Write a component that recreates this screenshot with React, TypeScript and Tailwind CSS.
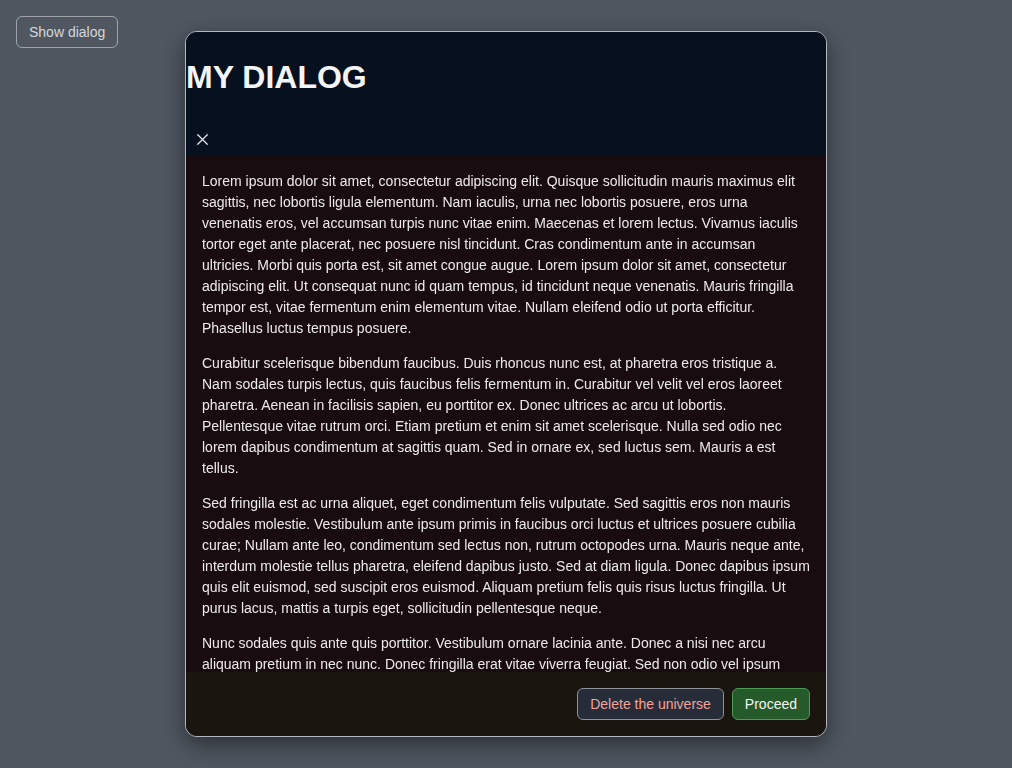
import React from "react";
import { X } from "lucide-react";

const paragraphs = [
  "Lorem ipsum dolor sit amet, consectetur adipiscing elit. Quisque sollicitudin mauris maximus elit sagittis, nec lobortis ligula elementum. Nam iaculis, urna nec lobortis posuere, eros urna venenatis eros, vel accumsan turpis nunc vitae enim. Maecenas et lorem lectus. Vivamus iaculis tortor eget ante placerat, nec posuere nisl tincidunt. Cras condimentum ante in accumsan ultricies. Morbi quis porta est, sit amet congue augue. Lorem ipsum dolor sit amet, consectetur adipiscing elit. Ut consequat nunc id quam tempus, id tincidunt neque venenatis. Mauris fringilla tempor est, vitae fermentum enim elementum vitae. Nullam eleifend odio ut porta efficitur. Phasellus luctus tempus posuere.",
  "Curabitur scelerisque bibendum faucibus. Duis rhoncus nunc est, at pharetra eros tristique a. Nam sodales turpis lectus, quis faucibus felis fermentum in. Curabitur vel velit vel eros laoreet pharetra. Aenean in facilisis sapien, eu porttitor ex. Donec ultrices ac arcu ut lobortis. Pellentesque vitae rutrum orci. Etiam pretium et enim sit amet scelerisque. Nulla sed odio nec lorem dapibus condimentum at sagittis quam. Sed in ornare ex, sed luctus sem. Mauris a est tellus.",
  "Sed fringilla est ac urna aliquet, eget condimentum felis vulputate. Sed sagittis eros non mauris sodales molestie. Vestibulum ante ipsum primis in faucibus orci luctus et ultrices posuere cubilia curae; Nullam ante leo, condimentum sed lectus non, rutrum octopodes urna. Mauris neque ante, interdum molestie tellus pharetra, eleifend dapibus justo. Sed at diam ligula. Donec dapibus ipsum quis elit euismod, sed suscipit eros euismod. Aliquam pretium felis quis risus luctus fringilla. Ut purus lacus, mattis a turpis eget, sollicitudin pellentesque neque.",
  "Nunc sodales quis ante quis porttitor. Vestibulum ornare lacinia ante. Donec a nisi nec arcu aliquam pretium in nec nunc. Donec fringilla erat vitae viverra feugiat. Sed non odio vel ipsum placerat pharetra. Integer quis mi ac nisl volutpat finibus. Curabitur ut tortor id leo ultricies pulvinar. Proin sit amet mauris eget felis pretium tincidunt.",
];

export default function App() {
  return (
    <div
      className="min-h-screen bg-[#505761] p-4"
      style={{ fontFamily: '"Liberation Sans", Arial, sans-serif' }}
    >
      <button className="h-8 rounded-md border border-[#9ea3aa] px-3 text-sm text-[#d4d7dc]">
        Show dialog
      </button>

      {/* Dialog */}
      <div className="fixed inset-0 flex items-center justify-center">
        <div className="flex h-[706px] w-[642px] flex-col overflow-hidden rounded-xl border border-[#b3b7bd] shadow-[0_8px_24px_rgba(0,0,0,0.45)]">
          {/* Header */}
          <div className="flex h-[123px] shrink-0 flex-col bg-[#07101e]">
            <h1 className="mt-[27px] text-[32px] leading-[37px] font-bold text-[#f3f4f6]">
              MY DIALOG
            </h1>
            <button className="mt-[38px] ml-[11px] flex h-[10px] w-[10px] items-center justify-center text-[#e5e7eb]">
              <X size={19} strokeWidth={1.5} className="shrink-0" />
            </button>
          </div>

          {/* Body */}
          <div className="min-h-0 flex-1 overflow-hidden bg-[#190c10] px-4 pt-4">
            {paragraphs.map((p, i) => (
              <p key={i} className="mb-[14px] text-sm leading-[21px] text-[#eceaea]">
                {p}
              </p>
            ))}
          </div>

          {/* Footer */}
          <div className="flex h-16 shrink-0 items-center justify-end gap-2 bg-[#1a150e] px-4">
            <button className="h-8 rounded-md border border-[#8d929a] bg-[#272d38] px-3 text-sm text-[#f2a39c]">
              Delete the universe
            </button>
            <button className="h-8 rounded-md border border-[#4f9a55] bg-[#255a2b] px-3 text-sm text-[#f1f5f1]">
              Proceed
            </button>
          </div>
        </div>
      </div>
    </div>
  );
}
